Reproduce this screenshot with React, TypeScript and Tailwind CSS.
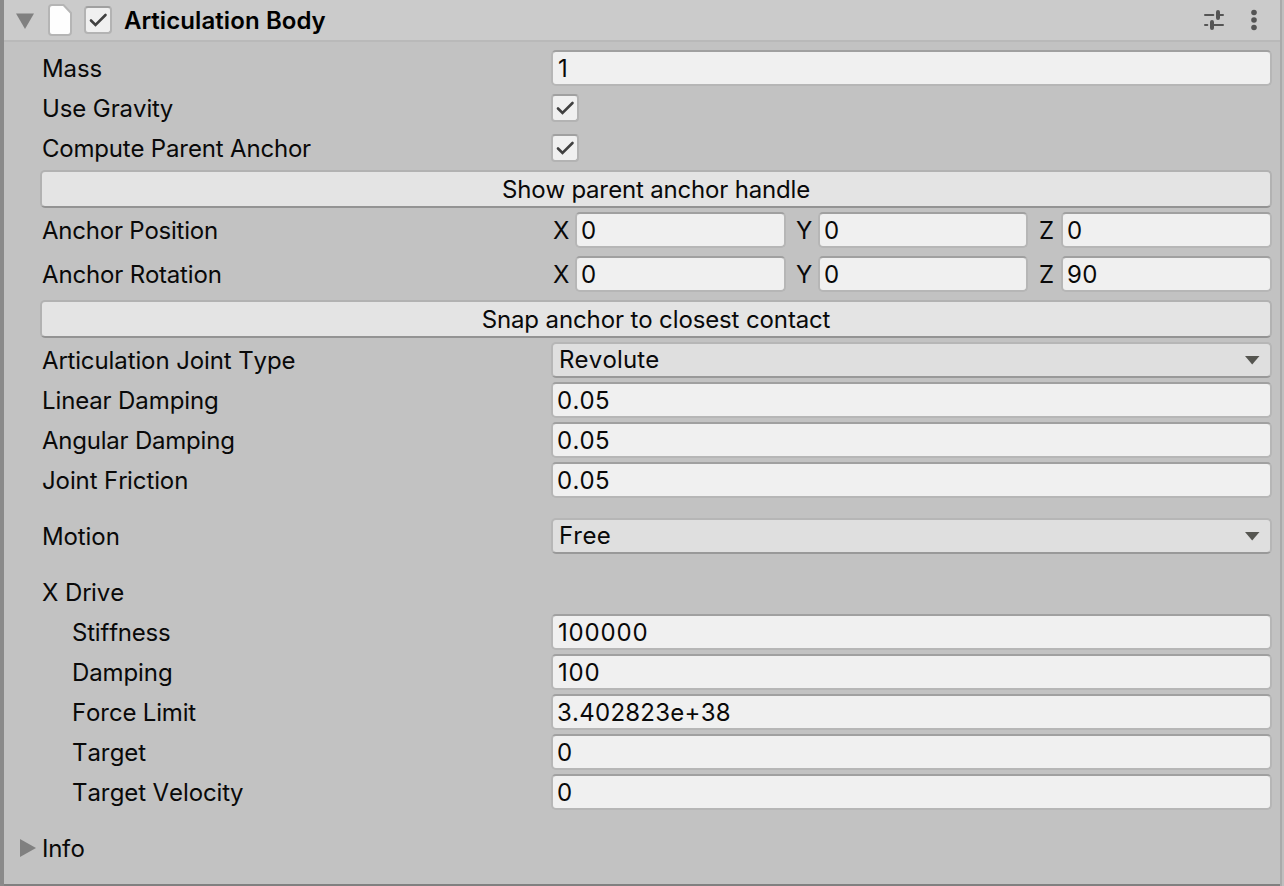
import type { ReactNode } from "react";

const fieldClass =
  "h-9 rounded-[5px] border-2 border-[#b6b6b6] border-t-[#a0a0a0] bg-[#f0f0f0] pl-1 pt-0.5 flex items-center tracking-[0.25px]";

function Check() {
  return (
    <div className="flex size-7 items-center justify-center rounded-[4px] border-2 border-[#b3b3b3] border-t-[#a0a0a0] bg-[#f0f0f0]">
      <svg width="24" height="24" viewBox="0 0 24 24" fill="none">
        <path d="M5 12.5L9.5 17L19.5 7" stroke="#404040" strokeWidth="2.6" strokeLinecap="round" />
      </svg>
    </div>
  );
}

function Row({
  label,
  indent = false,
  className = "mt-1",
  labelClass = "",
  children,
}: {
  label: string;
  indent?: boolean;
  className?: string;
  labelClass?: string;
  children?: ReactNode;
}) {
  return (
    <div className={`flex h-9 items-center ${className}`}>
      <div className={`w-[510px] shrink-0 pt-0.5 ${indent ? "pl-[31px]" : "pl-px"} ${labelClass}`}>{label}</div>
      <div className="flex-1">{children}</div>
    </div>
  );
}

function Field({ value, className = "" }: { value: string; className?: string }) {
  return (
    <div className={fieldClass}>
      <span className={className}>{value}</span>
    </div>
  );
}

function Dropdown({ value }: { value: string }) {
  return (
    <div className="flex h-9 items-center justify-between rounded-[5px] border-2 border-[#b6b6b6] border-b-[#999999] bg-[#dfdfdf] pr-[10px] pb-px pl-1.5 tracking-[0.15px]">
      <span>{value}</span>
      <svg width="16" height="10" viewBox="0 0 16 10">
        <path d="M1 1H15.5L8.2 9.5Z" fill="#555550" />
      </svg>
    </div>
  );
}

const axes = [
  { name: "X", size: "w-[235px] mr-2" },
  { name: "Y", size: "w-[234px] mr-[9px]" },
  { name: "Z", size: "flex-1" },
];

function Vector({ values }: { values: [string, string, string] }) {
  return (
    <div className="flex">
      {axes.map((axis, i) => (
        <div key={axis.name} className={`flex items-center ${axis.size}`}>
          <span className="w-6 pt-0.5 pl-0.5">{axis.name}</span>
          <div className={`${fieldClass} flex-1`}>{values[i]}</div>
        </div>
      ))}
    </div>
  );
}

function Button({ label, className }: { label: string; className: string }) {
  return (
    <div
      className={`flex h-[38px] items-center justify-center rounded-[5px] border-2 border-[#b2b2b2] border-b-[#939393] bg-[#e4e4e4] pt-0.5 ${className}`}
    >
      {label}
    </div>
  );
}

export default function App() {
  return (
    <div className="flex h-[886px] w-[1284px] overflow-hidden bg-[#c2c2c2] font-['Inter',sans-serif] text-[24px] leading-9 tracking-[-0.1px] whitespace-nowrap text-[#090909] [font-kerning:none]">
      <div className="w-1 shrink-0 bg-[#8a8a8a]" />
      <div className="flex flex-1 flex-col border-b-2 border-[#808080]">
        <header className="flex h-[42px] shrink-0 items-center border-b-2 border-[#b9b9b9] bg-[#cbcbcb] pl-3">
          <svg className="mt-px" width="18" height="16" viewBox="0 0 18 16">
            <path d="M0 0.5H18L9 16Z" fill="#808080" />
          </svg>
          <svg className="ml-[14px]" width="24" height="32" viewBox="0 0 24 32">
            <path
              d="M4 1H15.5L23 9V28A3 3 0 0 1 20 31H4A3 3 0 0 1 1 28V4A3 3 0 0 1 4 1Z"
              fill="#fefefe"
              stroke="#b5b5b5"
              strokeWidth="2"
            />
          </svg>
          <div className="ml-3">
            <Check />
          </div>
          <h1 className="ml-3 flex-1 pt-0.5 text-[24px] font-semibold tracking-[0.1px] text-black">
            Articulation Body
          </h1>
          <svg width="20" height="20" viewBox="0 0 20 20" fill="none" stroke="#555" strokeLinecap="round">
            <path d="M1 5H9.3M16 5H19M1 15H3.3M9 15H19" strokeWidth="2" />
            <path d="M14 2V8M8 12V18" strokeWidth="4" />
          </svg>
          <svg className="mr-[23px] ml-[27px]" width="6" height="22" viewBox="0 0 6 22" fill="#555">
            <circle cx="3" cy="3.5" r="2.8" />
            <circle cx="3" cy="11" r="2.8" />
            <circle cx="3" cy="18.5" r="2.8" />
          </svg>
        </header>
        <main className="flex flex-col pt-2 pr-2 pl-[37px]">
          <Row label="Mass" className="mt-0">
            <Field value="1" className="pl-px" />
          </Row>
          <Row label="Use Gravity">
            <Check />
          </Row>
          <Row label="Compute Parent Anchor" labelClass="tracking-[-0.2px]">
            <Check />
          </Row>
          <Button label="Show parent anchor handle" className="mt-1 -ml-px tracking-[-0.18px]" />
          <Row label="Anchor Position" labelClass="tracking-[-0.22px]">
            <Vector values={["0", "0", "0"]} />
          </Row>
          <Row label="Anchor Rotation" className="mt-2" labelClass="tracking-[-0.17px]">
            <Vector values={["0", "0", "90"]} />
          </Row>
          <Button label="Snap anchor to closest contact" className="mt-2 -ml-px tracking-[-0.12px]" />
          <Row label="Articulation Joint Type">
            <Dropdown value="Revolute" />
          </Row>
          <Row label="Linear Damping">
            <Field value="0.05" />
          </Row>
          <Row label="Angular Damping" labelClass="tracking-[-0.22px]">
            <Field value="0.05" />
          </Row>
          <Row label="Joint Friction">
            <Field value="0.05" />
          </Row>
          <Row label="Motion" className="mt-5">
            <Dropdown value="Free" />
          </Row>
          <Row label="X Drive" className="mt-5" />
          <Row label="Stiffness" indent labelClass="tracking-[-0.2px]">
            <Field value="100000" className="pl-px tracking-[0.85px]" />
          </Row>
          <Row label="Damping" indent>
            <Field value="100" className="pl-px tracking-[0.85px]" />
          </Row>
          <Row label="Force Limit" indent labelClass="tracking-[-0.2px]">
            <Field value="3.402823e+38" />
          </Row>
          <Row label="Target" indent>
            <Field value="0" />
          </Row>
          <Row label="Target Velocity" indent>
            <Field value="0" />
          </Row>
          <div className="mt-5 -ml-[21px] flex h-9 items-center">
            <svg width="16" height="18" viewBox="0 0 16 18">
              <path d="M0 0L16 9L0 18Z" fill="#808080" />
            </svg>
            <span className="ml-1.5 pt-0.5 tracking-[-0.3px]">Info</span>
          </div>
        </main>
      </div>
      <div className="w-0.5 shrink-0 bg-[#aaaaaa]" />
      <div className="w-0.5 shrink-0 bg-[#bfbfbf]" />
    </div>
  );
}
